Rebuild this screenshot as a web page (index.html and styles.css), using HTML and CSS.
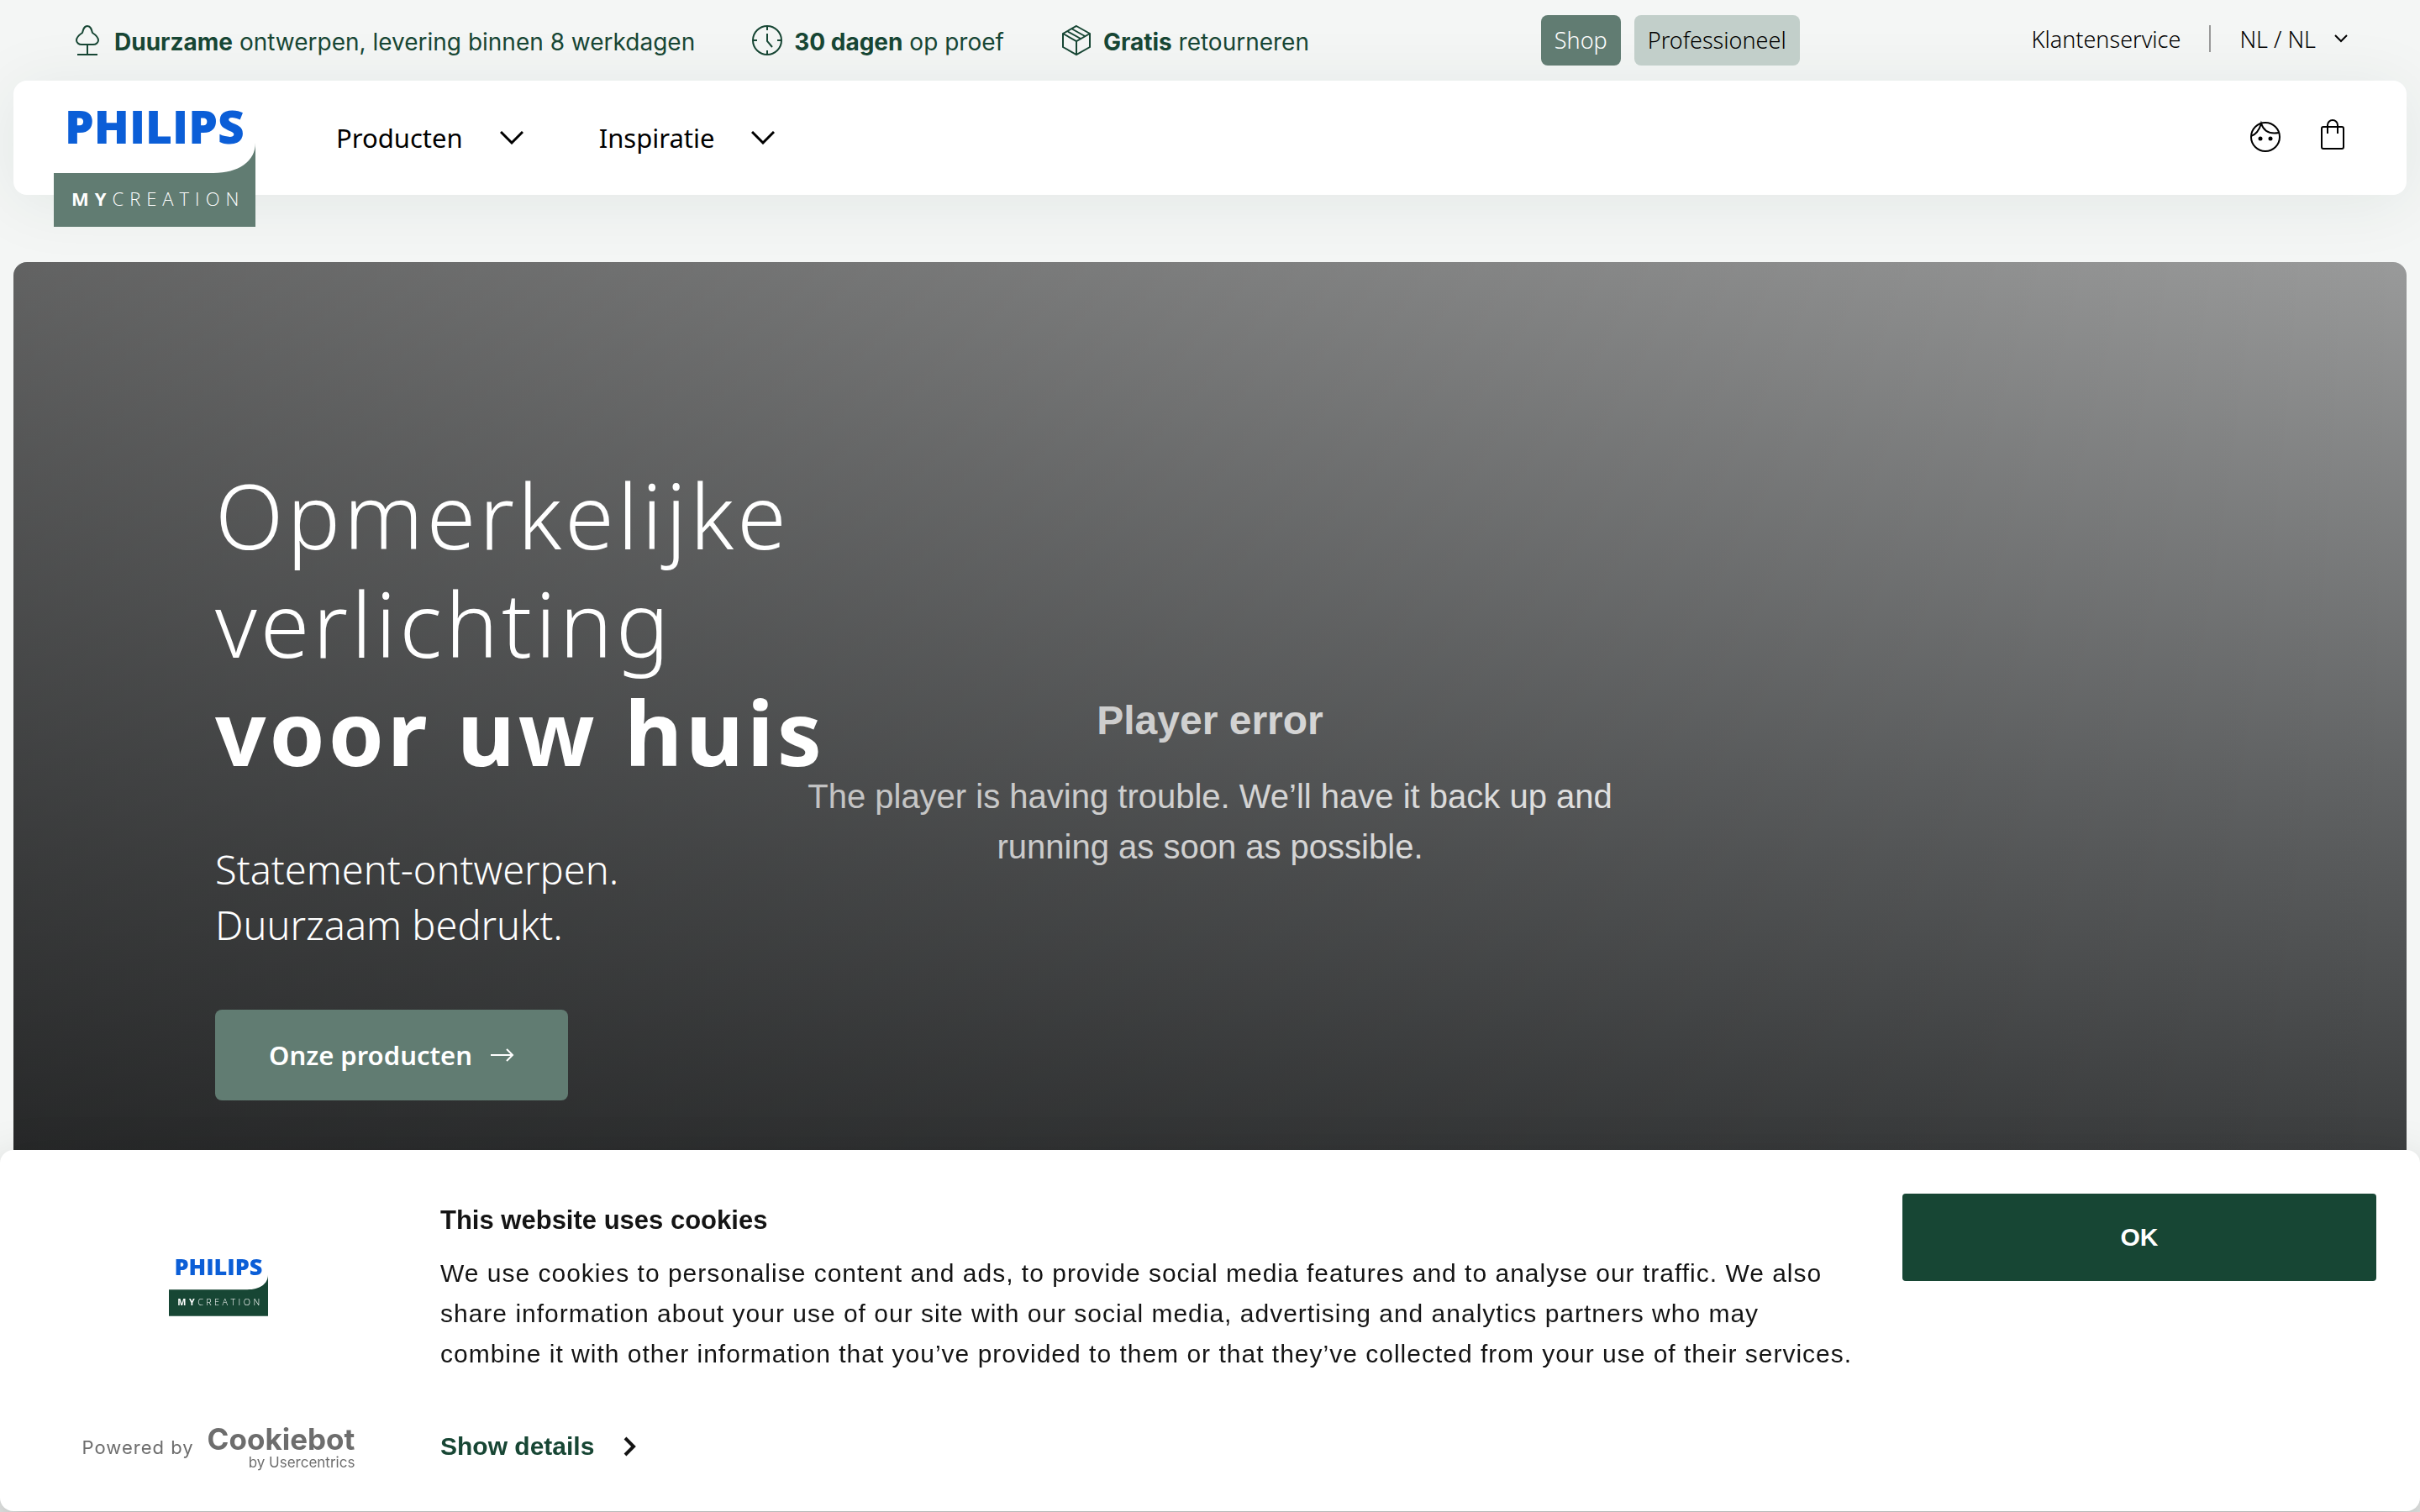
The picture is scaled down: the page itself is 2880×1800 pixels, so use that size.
FILE: index.html
```html
<!DOCTYPE html>
<html lang="nl">
<head>
    <meta charset="UTF-8">
    <title>Philips MyCreation</title>
    <link rel="stylesheet" href="styles.css">
</head>
<body>
<header>
    <div class="topbar">
        <ul class="usps">
            <li>
                <svg class="usp-icon" viewBox="0 0 36 38">
                    <path d="M18 2c4 0 5 4 6 8 3 2 7 5 7 9 0 3-3 5-6 5H11c-3 0-6-2-6-5 0-4 4-7 7-9 1-4 2-8 6-8zM18 24v12M6 36h24"/>
                </svg>
                <span><b>Duurzame</b> ontwerpen, levering binnen 8 werkdagen</span>
            </li>
            <li>
                <svg class="usp-icon" viewBox="0 0 36 38">
                    <circle cx="18" cy="19" r="17"/>
                    <path d="M18 2v5M18 31v5M1 19h5M30 19h5M18 11v9l6 7"/>
                </svg>
                <span><b>30 dagen</b> op proef</span>
            </li>
            <li>
                <svg class="usp-icon" viewBox="0 0 36 38">
                    <path d="M18 2l16 9v16l-16 9-16-9V11zM2 11l16 9 16-9M18 20v16M7 8l16 9M12 5l16 9"/>
                </svg>
                <span><b>Gratis</b> retourneren</span>
            </li>
        </ul>
        <div class="segments">
            <a href="#" class="segment active">Shop</a>
            <a href="#" class="segment">Professioneel</a>
        </div>
        <div class="service">
            <a href="#">Klantenservice</a>
            <span class="divider"></span>
            <button class="language">NL / NL
                <svg class="chevron-small" viewBox="0 0 16 10"><path d="M1 1l7 7 7-7"/></svg>
            </button>
        </div>
    </div>
    <nav class="navbar">
        <a href="#" class="logo" aria-label="Philips MyCreation">
            <svg viewBox="0 0 240 174">
                <path class="logo-plate" d="M240 74v100H0v-64h190c30 0 50-14 50-36z"/>
                <text class="logo-name" x="13" y="75">PHILIPS</text>
                <text class="logo-sub" x="21" y="149"><tspan class="logo-strong">MY</tspan>CREATION</text>
            </svg>
        </a>
        <button class="nav-item">Producten
            <svg class="chevron" viewBox="0 0 28 16"><path d="M1 1l13 13L27 1"/></svg>
        </button>
        <button class="nav-item">Inspiratie
            <svg class="chevron" viewBox="0 0 28 16"><path d="M1 1l13 13L27 1"/></svg>
        </button>
        <div class="nav-actions">
            <a href="#" aria-label="Account">
                <svg class="action-icon" viewBox="0 0 40 44">
                    <circle cx="20" cy="21" r="17"/>
                    <path d="M3 20c6-2 10-8 12-15 3 9 10 13 21 11"/>
                    <circle class="dot" cx="14" cy="23" r="2.5"/>
                    <circle class="dot" cx="26" cy="23" r="2.5"/>
                </svg>
            </a>
            <a href="#" aria-label="Winkelwagen">
                <svg class="action-icon" viewBox="0 0 40 44">
                    <rect x="7" y="9" width="26" height="26" rx="2"/>
                    <path d="M14 17V7a6 6 0 0 1 12 0v10"/>
                </svg>
            </a>
        </div>
    </nav>
</header>
<main class="hero">
    <div class="player">
        <h2>Player error</h2>
        <p>The player is having trouble. We’ll have it back up and running as soon as possible.</p>
    </div>
    <div class="hero-content">
        <h1>Opmerkelijke<br>verlichting<br><b>voor uw huis</b></h1>
        <p>Statement-ontwerpen.<br>Duurzaam bedrukt.</p>
        <a href="#" class="cta">Onze producten
            <svg viewBox="0 0 28 18"><path d="M0 9h26M19 2l7 7-7 7"/></svg>
        </a>
    </div>
</main>
<div class="cookie" role="dialog" aria-labelledby="cookieTitle">
    <div class="cookie-brand">
        <svg class="cookie-logo" viewBox="0 0 240 174">
            <path class="logo-plate" d="M240 74v100H0v-64h190c30 0 50-14 50-36z"/>
            <text class="logo-name" x="13" y="75">PHILIPS</text>
            <text class="logo-sub" x="21" y="149"><tspan class="logo-strong">MY</tspan>CREATION</text>
        </svg>
        <div class="powered">
            <span class="powered-by">Powered by</span>
            <a href="#" class="cookiebot">
                <span class="cookiebot-name">Cookiebot</span>
                <span class="cookiebot-by">by Usercentrics</span>
            </a>
        </div>
    </div>
    <div class="cookie-text">
        <h2 id="cookieTitle">This website uses cookies</h2>
        <p>We use cookies to personalise content and ads, to provide social media features and to analyse our traffic. We also share information about your use of our site with our social media, advertising and analytics partners who may combine it with other information that you’ve provided to them or that they’ve collected from your use of their services.</p>
        <a href="#" class="details">Show details
            <svg viewBox="0 0 16 24"><path d="M3 2l10 10L3 22"/></svg>
        </a>
    </div>
    <button class="accept">OK</button>
</div>
</body>
</html>
```
FILE: styles.css
```css
* {
    box-sizing: border-box;
}

body {
    margin: 0;
    min-height: 100vh;
    overflow: hidden;
    background: #f4f6f5;
    color: #000;
    font-family: "Noto Sans", "Open Sans", sans-serif;
    font-size: 27px;
}

h1, h2, p, ul {
    margin: 0;
    padding: 0;
}

a {
    color: inherit;
    text-decoration: none;
}

button {
    padding: 0;
    border: 0;
    background: none;
    color: inherit;
    font: inherit;
}

b {
    font-weight: 700;
}

svg {
    display: block;
    fill: none;
    stroke: currentColor;
    stroke-width: 2;
}

/* logo */
.logo-plate {
    fill: currentColor;
    stroke: none;
}

.logo-name {
    fill: #0b5ed7;
    stroke: none;
    font: 800 55px "Open Sans", sans-serif;
}

.logo-sub {
    fill: #fff;
    stroke: none;
    font: 300 22px "Open Sans", sans-serif;
    letter-spacing: 7px;
}

.logo-strong {
    font-weight: 700;
}

/* top bar */
.topbar {
    display: flex;
    align-items: center;
    justify-content: space-between;
    height: 96px;
    padding: 0 86px;
}

.usps {
    display: flex;
    gap: 68px;
    list-style: none;
    color: #174634;
    font-family: Inter, sans-serif;
    font-size: 28px;
}

.usps li {
    display: flex;
    align-items: center;
    gap: 14px;
}

.usps span {
    padding-top: 4px;
}

.usp-icon {
    width: 36px;
    height: 38px;
}

.segments {
    display: flex;
    gap: 16px;
}

.segment {
    padding: 0 16px;
    border-radius: 8px;
    background: #c2cfca;
    font-weight: 300;
    line-height: 60px;
}

.segment.active {
    background: #617c72;
    color: #fff;
}

.service {
    display: flex;
    align-items: center;
    gap: 34px;
    padding-bottom: 4px;
    font-weight: 300;
}

.divider {
    width: 2px;
    height: 32px;
    background: #999;
}

.language {
    display: flex;
    align-items: center;
    gap: 22px;
}

.chevron-small {
    width: 16px;
    height: 10px;
}

/* navigation */
.navbar {
    display: flex;
    align-items: center;
    height: 136px;
    margin: 0 16px;
    padding: 0 68px 0 48px;
    border-radius: 16px;
    background: #fff;
    box-shadow: 0 8px 80px rgba(23, 70, 52, 0.08);
}

.logo {
    align-self: flex-start;
    margin-right: 96px;
    color: #617c72;
}

.logo svg {
    width: 240px;
    height: 174px;
}

.nav-item {
    display: flex;
    align-items: center;
    gap: 44px;
    margin-right: 90px;
    font-size: 31px;
}

.chevron {
    width: 28px;
    height: 16px;
    stroke-width: 3;
}

.nav-actions {
    display: flex;
    gap: 40px;
    margin-left: auto;
}

.action-icon {
    width: 40px;
    height: 44px;
}

.dot {
    fill: currentColor;
    stroke: none;
}

/* hero */
.hero {
    position: relative;
    display: flex;
    align-items: center;
    min-height: 69vh;
    margin: 80px 16px 0;
    padding: 0 240px 8px;
    border-radius: 16px;
    background: linear-gradient(#999a9a, #616364 50%, #2d2f30);
    color: #fff;
}

.hero::before {
    content: "";
    position: absolute;
    inset: 0;
    z-index: 1;
    border-radius: inherit;
    background: linear-gradient(to right, rgba(0, 0, 0, 0.36), transparent);
}

.player {
    position: absolute;
    inset: 0;
    display: flex;
    flex-direction: column;
    align-items: center;
    justify-content: center;
    gap: 30px;
    font-family: "Liberation Sans", sans-serif;
    font-size: 40px;
    line-height: 60px;
    text-align: center;
}

.player h2 {
    font-size: 48px;
}

.player p {
    max-width: 1000px;
}

.hero-content {
    position: relative;
    z-index: 2;
}

.hero h1 {
    font-size: 106px;
    font-weight: 300;
    letter-spacing: 4px;
    line-height: 129px;
}

.hero-content p {
    margin: 66px 0 68px;
    font-size: 47px;
    font-weight: 300;
    line-height: 66px;
}

.cta {
    display: inline-flex;
    align-items: center;
    gap: 22px;
    padding: 0 64px;
    border-radius: 8px;
    background: #617c72;
    font-size: 31px;
    font-weight: 600;
    line-height: 108px;
}

.cta svg {
    width: 28px;
    height: 18px;
}

/* cookie banner */
.cookie {
    position: fixed;
    right: 0;
    bottom: 1px;
    left: 0;
    z-index: 3;
    display: flex;
    gap: 4px;
    padding: 52px 52px 48px 0;
    border-radius: 16px;
    background: #fff;
    box-shadow: 0 32px 68px rgba(0, 0, 0, 0.3);
    color: #141414;
    font-family: "Liberation Sans", sans-serif;
    font-size: 30px;
}

.cookie-brand {
    display: flex;
    flex-direction: column;
    align-items: center;
    justify-content: space-between;
    width: 520px;
    padding-top: 60px;
}

.cookie-logo {
    width: 118px;
    height: 86px;
    color: #174634;
}

.powered {
    display: flex;
    align-items: center;
    gap: 16px;
    color: #6d6d6d;
    font-family: Inter, sans-serif;
    font-size: 22px;
}

.powered-by {
    letter-spacing: 1px;
}

.cookiebot {
    display: flex;
    flex-direction: column;
    text-align: right;
}

.cookiebot-name {
    font-size: 35px;
    font-weight: 700;
    line-height: 36px;
}

.cookiebot-by {
    font-size: 17px;
    line-height: 20px;
}

.cookie-text {
    flex: 1;
    padding-bottom: 5px;
}

.cookie-text h2 {
    margin-bottom: 7px;
    font-size: 31px;
    line-height: 64px;
}

.cookie-text p {
    max-width: 1692px;
    letter-spacing: 1px;
    line-height: 48px;
}

.details {
    display: inline-flex;
    align-items: center;
    gap: 34px;
    margin-top: 62px;
    color: #174634;
    font-weight: 700;
    line-height: 48px;
}

.details svg {
    width: 16px;
    height: 24px;
    stroke: #141414;
    stroke-width: 4;
}

.accept {
    width: 564px;
    height: 104px;
    border-radius: 4px;
    background: #174634;
    color: #fff;
    font-weight: 700;
}
```
